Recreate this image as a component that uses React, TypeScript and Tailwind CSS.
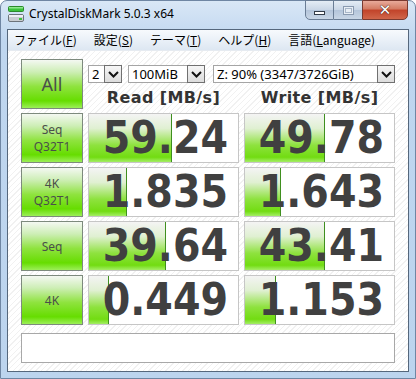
import React from "react";

type Row = { top: string; bottom?: string; read: string; write: string; rw: number; ww: number };

const rows: Row[] = [
	{ top: "Seq", bottom: "Q32T1", read: "59.24", write: "49.78", rw: 83, ww: 80 },
	{ top: "4K", bottom: "Q32T1", read: "1.835", write: "1.643", rw: 38, ww: 36 },
	{ top: "Seq", read: "39.64", write: "43.41", rw: 77, ww: 80 },
	{ top: "4K", read: "0.449", write: "1.153", rw: 20, ww: 31 },
];

function DriveIcon() {
	return (
		<svg width="16" height="17" viewBox="0 0 16 17">
			<rect x="0.5" y="0.5" width="15" height="5" rx="1" fill="#3cc23c" stroke="#2a8a2a" />
			<rect x="1" y="1" width="14" height="1.5" fill="#8ee88e" />
			<rect x="0.5" y="8.5" width="15" height="7" rx="1.5" fill="#c9cdd2" stroke="#6c737b" />
			<rect x="1" y="9" width="14" height="2" fill="#eef0f2" />
			<rect x="11" y="12" width="3" height="2" fill="#3cc23c" />
		</svg>
	);
}

function Chevron() {
	return (
		<svg width="11" height="7" viewBox="0 0 11 7">
			<path d="M1 1 L5.5 5.5 L10 1" fill="none" stroke="#111" strokeWidth="2" />
		</svg>
	);
}

function Select({ value, width }: { value: string; width: string }) {
	return (
		<div className={`flex h-[18px] ${width} border border-[#a5a5a5] bg-white`}>
			<div className="flex-1 pl-[3px] text-[13px] leading-[16px] text-black font-['Noto_Sans',sans-serif]">
				{value}
			</div>
			<div className="flex w-[18px] items-center justify-center border border-[#707070] bg-[linear-gradient(#f6f6f6,#dcdcdc)] -m-px">
				<Chevron />
			</div>
		</div>
	);
}

function TestButton({ top, bottom, big }: { top: string; bottom?: string; big?: boolean }) {
	return (
		<div className="flex h-[50px] flex-col items-center justify-center border border-[#7d8a7d] bg-[linear-gradient(#f4f8f2_0%,#cdeeb5_25%,#8fe33f_55%,#66dd00_85%,#9cef58_100%)] text-[#4a4f4a] font-['Noto_Sans',sans-serif]">
			{big ? (
				<span className="text-[18px] leading-none">{top}</span>
			) : (
				<>
					<span className="text-[12px] leading-[17px]">{top}</span>
					{bottom && <span className="text-[12px] leading-[17px]">{bottom}</span>}
				</>
			)}
		</div>
	);
}

function Result({ value, fill }: { value: string; fill: number }) {
	return (
		<div className="relative h-[50px] border border-[#c6c6c6] bg-white">
			<div
				className="absolute left-0 top-0 bottom-0 border-r border-[#3f8f1f] bg-[linear-gradient(#f4f4f4_0%,#e0f0d2_30%,#8ee23e_65%,#72dc12_90%,#a4ee66_100%)]"
				style={{ width: fill }}
			/>
			<div className="relative flex h-full items-center justify-end pr-[10px] text-[44px] font-bold leading-none text-[#404040] font-['DejaVu_Sans_Condensed','DejaVu_Sans',sans-serif]">
				{value}
			</div>
		</div>
	);
}

export default function App() {
	return (
		<div className="flex h-[379px] w-[416px] flex-col rounded-t-[7px] border border-[#6f86a3] bg-[linear-gradient(#d9e7f6,#bfd6ef_40px,#bcd4ee)]">
			<div className="flex h-[28px] items-start">
				<div className="ml-[7px] mt-[5px]">
					<DriveIcon />
				</div>
				<div className="ml-[5px] mt-[5px] text-[12px] leading-[16px] text-black font-['Noto_Sans',sans-serif]">
					CrystalDiskMark 5.0.3 x64
				</div>
				<div className="ml-auto mr-[7px] -mt-px flex h-[20px]">
					<div className="flex w-[29px] items-center justify-center rounded-bl-[5px] border border-[#6a7d95] bg-[linear-gradient(#e4ecf5,#c9d6e6_50%,#b4c5da_51%,#c8d6e6)]">
						<div className="mt-[5px] h-[4px] w-[11px] border border-[#333c48] bg-white" />
					</div>
					<div className="flex w-[28px] items-center justify-center border-y border-[#6a7d95] bg-[linear-gradient(#e4ecf5,#c9d6e6_50%,#b4c5da_51%,#c8d6e6)]">
						<div className="h-[9px] w-[11px] border border-[#8a9ab0] bg-[#e8eef5]">
							<div className="m-[1px] h-[5px] border border-[#a8b6c8]" />
						</div>
					</div>
					<div className="flex w-[46px] items-center justify-center rounded-br-[5px] border border-[#7a3a30] bg-[linear-gradient(#e8aa9a,#d37a62_45%,#c2432a_50%,#d0664a)]">
						<span className="text-[15px] font-bold leading-none text-white [text-shadow:0_0_1px_#3a1a14,0_0_1px_#3a1a14] font-['DejaVu_Sans',sans-serif]">
							✕
						</span>
					</div>
				</div>
			</div>
			<div className="mx-[6px] mb-[6px] flex flex-1 flex-col border border-[#55677c]">
				<div className="flex h-[20px] items-center gap-[17px] bg-[linear-gradient(#f7fafd,#dde7f2)] pl-[6px] text-[12px] text-black font-['Noto_Sans_CJK_JP',sans-serif] leading-none">
					<span>ファイル(<span className="underline">F</span>)</span>
					<span>設定(<span className="underline">S</span>)</span>
					<span>テーマ(<span className="underline">T</span>)</span>
					<span>ヘルプ(<span className="underline">H</span>)</span>
					<span>言語(<span className="underline">L</span>anguage)</span>
				</div>
				<div className="flex-1 border-t border-[#e6ebf1] bg-[repeating-linear-gradient(-45deg,#ffffff_0px,#ffffff_3px,#f1f1f1_3px,#f1f1f1_4px)] pl-[13px] pt-[8px]">
					<div className="grid w-[374px] grid-cols-[62px_151px_151px] gap-x-[5px] gap-y-[4px]">
						<TestButton top="All" big />
						<div className="col-span-2 flex flex-col">
							<div className="mt-[6px] flex">
								<Select value="2" width="w-[36px]" />
								<div className="ml-[6px]">
									<Select value="100MiB" width="w-[77px]" />
								</div>
								<div className="ml-[8px]">
									<Select value="Z: 90% (3347/3726GiB)" width="w-[182px]" />
								</div>
							</div>
							<div className="mt-[5px] flex text-[16px] font-bold leading-[20px] tracking-[0.4px] text-[#333] font-['DejaVu_Sans',sans-serif]">
								<div className="w-[151px] text-center">Read [MB/s]</div>
								<div className="ml-[5px] w-[151px] text-center">Write [MB/s]</div>
							</div>
						</div>
						{rows.map((r, i) => (
							<React.Fragment key={i}>
								<TestButton top={r.top} bottom={r.bottom} />
								<Result value={r.read} fill={r.rw} />
								<Result value={r.write} fill={r.ww} />
							</React.Fragment>
						))}
					</div>
					<div className="mt-[8px] h-[30px] w-[374px] border border-[#a8a8a8] bg-white" />
				</div>
			</div>
		</div>
	);
}
